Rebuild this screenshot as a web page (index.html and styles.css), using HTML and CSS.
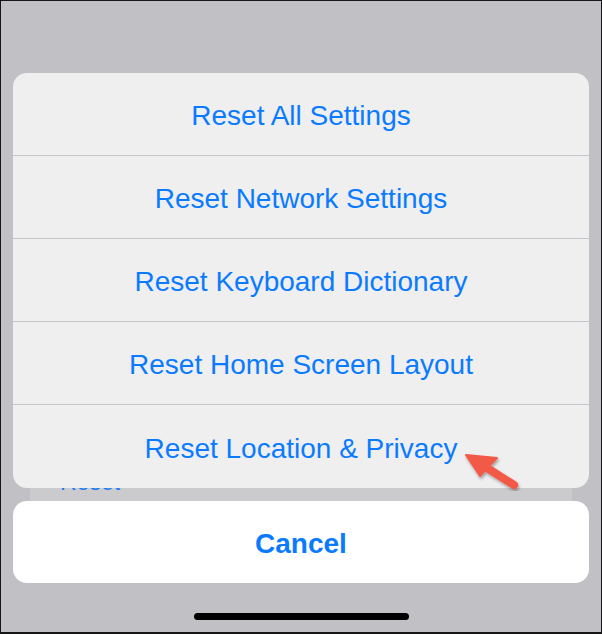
FILE: index.html
```html
<!DOCTYPE html>
<html lang="en">
<head>
    <meta charset="UTF-8">
    <meta name="viewport" content="width=device-width, initial-scale=1.0">
    <title>Reset</title>
    <link rel="stylesheet" href="styles.css">
</head>
<body>
    <div class="screen">
        <!-- settings list peeking out under the sheet -->
        <div class="under-panel">
            <span class="under-label">Reset</span>
        </div>

        <div class="action-sheet">
            <div class="sheet-group">
                <button class="sheet-row">Reset All Settings</button>
                <button class="sheet-row">Reset Network Settings</button>
                <button class="sheet-row">Reset Keyboard Dictionary</button>
                <button class="sheet-row">Reset Home Screen Layout</button>
                <button class="sheet-row">Reset Location &amp; Privacy</button>
            </div>
            <button class="cancel-button">Cancel</button>
        </div>

        <!-- pointer arrow -->
        <svg class="pointer" width="602" height="634" viewBox="0 0 602 634">
            <defs>
                <filter id="drop" x="-20%" y="-20%" width="140%" height="140%">
                    <feDropShadow dx="1" dy="2" stdDeviation="1.5" flood-color="#000" flood-opacity="0.35"/>
                </filter>
            </defs>
            <g filter="url(#drop)" fill="#f25a46" stroke="#f25a46">
                <line x1="484" y1="466" x2="514" y2="485" stroke-width="8" stroke-linecap="round"/>
                <path d="M466 455 L497 458 L488 467 L480 476 Z" stroke-width="2" stroke-linejoin="round"/>
            </g>
        </svg>

        <div class="home-indicator"></div>
    </div>
</body>
</html>
```

FILE: styles.css
```css
* {
    margin: 0;
    padding: 0;
    box-sizing: border-box;
}

body {
    background: #c1c0c4;
    font-family: 'Liberation Sans', Arial, sans-serif;
}

.screen {
    position: relative;
    width: 602px;
    height: 634px;
    border: 1px solid #161616;
    border-bottom-width: 2px;
    background: #c1c0c4;
    padding: 72px 12px 0;
    overflow: hidden;
}

.under-panel {
    position: absolute;
    left: 29px;
    right: 29px;
    top: 440px;
    height: 61px;
    background: #cbcbcd;
}

.under-label {
    position: absolute;
    left: 30px;
    top: 28px;
    font-size: 23px;
    color: #1a7bf5;
}

.action-sheet {
    position: relative;
    display: flex;
    flex-direction: column;
    gap: 13px;
}

.sheet-group {
    display: flex;
    flex-direction: column;
    background: #efeff0;
    border-radius: 14px;
    overflow: hidden;
}

.sheet-row {
    height: 83px;
    padding-top: 4px;
    border: none;
    border-bottom: 1px solid #c6c6c8;
    background: none;
    font-family: inherit;
    font-size: 28px;
    color: #0a7bff;
    cursor: pointer;
}

.sheet-row:last-child {
    height: 83px;
    border-bottom: none;
}

.cancel-button {
    height: 82px;
    padding-top: 3px;
    border: none;
    border-radius: 14px;
    background: #fff;
    font-family: inherit;
    font-size: 28px;
    font-weight: bold;
    color: #0a7bff;
    cursor: pointer;
}

.pointer {
    position: absolute;
    left: -1px;
    top: -1px;
}

.home-indicator {
    position: absolute;
    left: 193px;
    top: 612px;
    width: 215px;
    height: 7px;
    border-radius: 4px;
    background: #000;
}
```
